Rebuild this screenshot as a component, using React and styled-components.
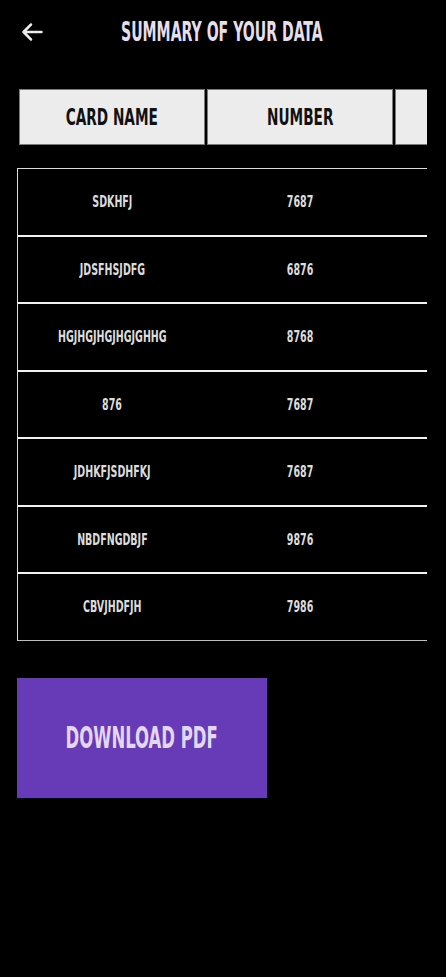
import React from "react";
import styled, { createGlobalStyle } from "styled-components";

const GlobalStyle = createGlobalStyle`
  html, body {
    margin: 0;
    padding: 0;
    background: #000;
  }
  body {
    font-family: "DejaVu Sans Condensed", "DejaVu Sans", sans-serif;
  }
`;

const Page = styled.div`
  min-height: 977px;
  background: #000;
  padding: 12px 19px 0 17px;
  box-sizing: border-box;
`;

const Header = styled.div`
  display: flex;
  align-items: center;
  height: 40px;
`;

const BackButton = styled.button`
  background: transparent;
  border: none;
  padding: 0;
  margin-left: 4px;
  width: 22px;
  height: 22px;
  display: flex;
  align-items: center;
  cursor: pointer;
`;

const Title = styled.h1`
  flex: 1;
  margin: 0;
  padding-right: 26px;
  text-align: center;
  color: #e4dfeb;
  font-size: 27px;
  font-weight: bold;
  line-height: 40px;
`;

// condensed look: the face we have is wider than the original one
const Squash = styled.span`
  display: inline-block;
  white-space: nowrap;
  transform: scaleX(${(p) => p.$sx || 0.65});
`;

const Scroller = styled.div`
  margin-top: 37px;
  width: 410px;
  overflow: hidden;
`;

const HeadRow = styled.div`
  display: flex;
  gap: 2px;
  padding-left: 2px;
`;

const HeadCell = styled.div`
  flex: 0 0 186px;
  height: 56px;
  box-sizing: border-box;
  background: #ececec;
  border: 1px solid #7a7a7a;
  display: flex;
  align-items: center;
  justify-content: center;
  color: #111;
  font-size: 23px;
  font-weight: bold;
`;

const Body = styled.div`
  margin-top: 23px;
  width: 560px;
  border-left: 1px solid #dcdcdc;
  border-top: 1px solid #dcdcdc;
  border-bottom: 1px solid #bdbdbd;
`;

const Row = styled.div`
  display: flex;
  height: 65.5px;
  border-top: ${(p) => (p.$first ? "none" : "2px solid #f2f2f2")};
`;

const Cell = styled.div`
  flex: 0 0 188px;
  display: flex;
  align-items: center;
  justify-content: center;
  color: #dcdcdc;
  font-size: 16px;
  font-weight: bold;
`;

const DownloadButton = styled.button`
  margin-top: 37px;
  width: 250px;
  height: 120px;
  padding: 0;
  display: flex;
  align-items: center;
  justify-content: center;
  background: #673ab7;
  border: none;
  color: #e3d7f1;
  font-family: inherit;
  font-size: 30px;
  font-weight: bold;
  cursor: pointer;
`;

const rows = [
  ["SDKHFJ", "7687"],
  ["JDSFHSJDFG", "6876"],
  ["HGJHGJHGJHGJGHHG", "8768"],
  ["876", "7687"],
  ["JDHKFJSDHFKJ", "7687"],
  ["NBDFNGDBJF", "9876"],
  ["CBVJHDFJH", "7986"],
];

const BackArrow = () => (
  <svg width="22" height="20" viewBox="0 0 22 20" fill="none">
    <path
      d="M20.5 10H2.5M10 2.5L2.5 10L10 17.5"
      stroke="#ececec"
      strokeWidth="2.5"
      strokeLinecap="round"
      strokeLinejoin="round"
    />
  </svg>
);

export default function App() {
  return (
    <>
      <GlobalStyle />
      <Page>
        <Header>
          <BackButton>
            <BackArrow />
          </BackButton>
          <Title>
            <Squash $sx={0.58}>SUMMARY OF YOUR DATA</Squash>
          </Title>
        </Header>
        <Scroller>
          <HeadRow>
            <HeadCell>
              <Squash $sx={0.66}>CARD NAME</Squash>
            </HeadCell>
            <HeadCell>
              <Squash $sx={0.66}>NUMBER</Squash>
            </HeadCell>
            <HeadCell />
          </HeadRow>
          <Body>
            {rows.map(([name, num], i) => (
              <Row key={i} $first={i === 0}>
                <Cell>
                  <Squash $sx={0.66}>{name}</Squash>
                </Cell>
                <Cell>
                  <Squash $sx={0.66}>{num}</Squash>
                </Cell>
                <Cell />
              </Row>
            ))}
          </Body>
        </Scroller>
        <DownloadButton>
          <Squash $sx={0.61}>DOWNLOAD PDF</Squash>
        </DownloadButton>
      </Page>
    </>
  );
}
